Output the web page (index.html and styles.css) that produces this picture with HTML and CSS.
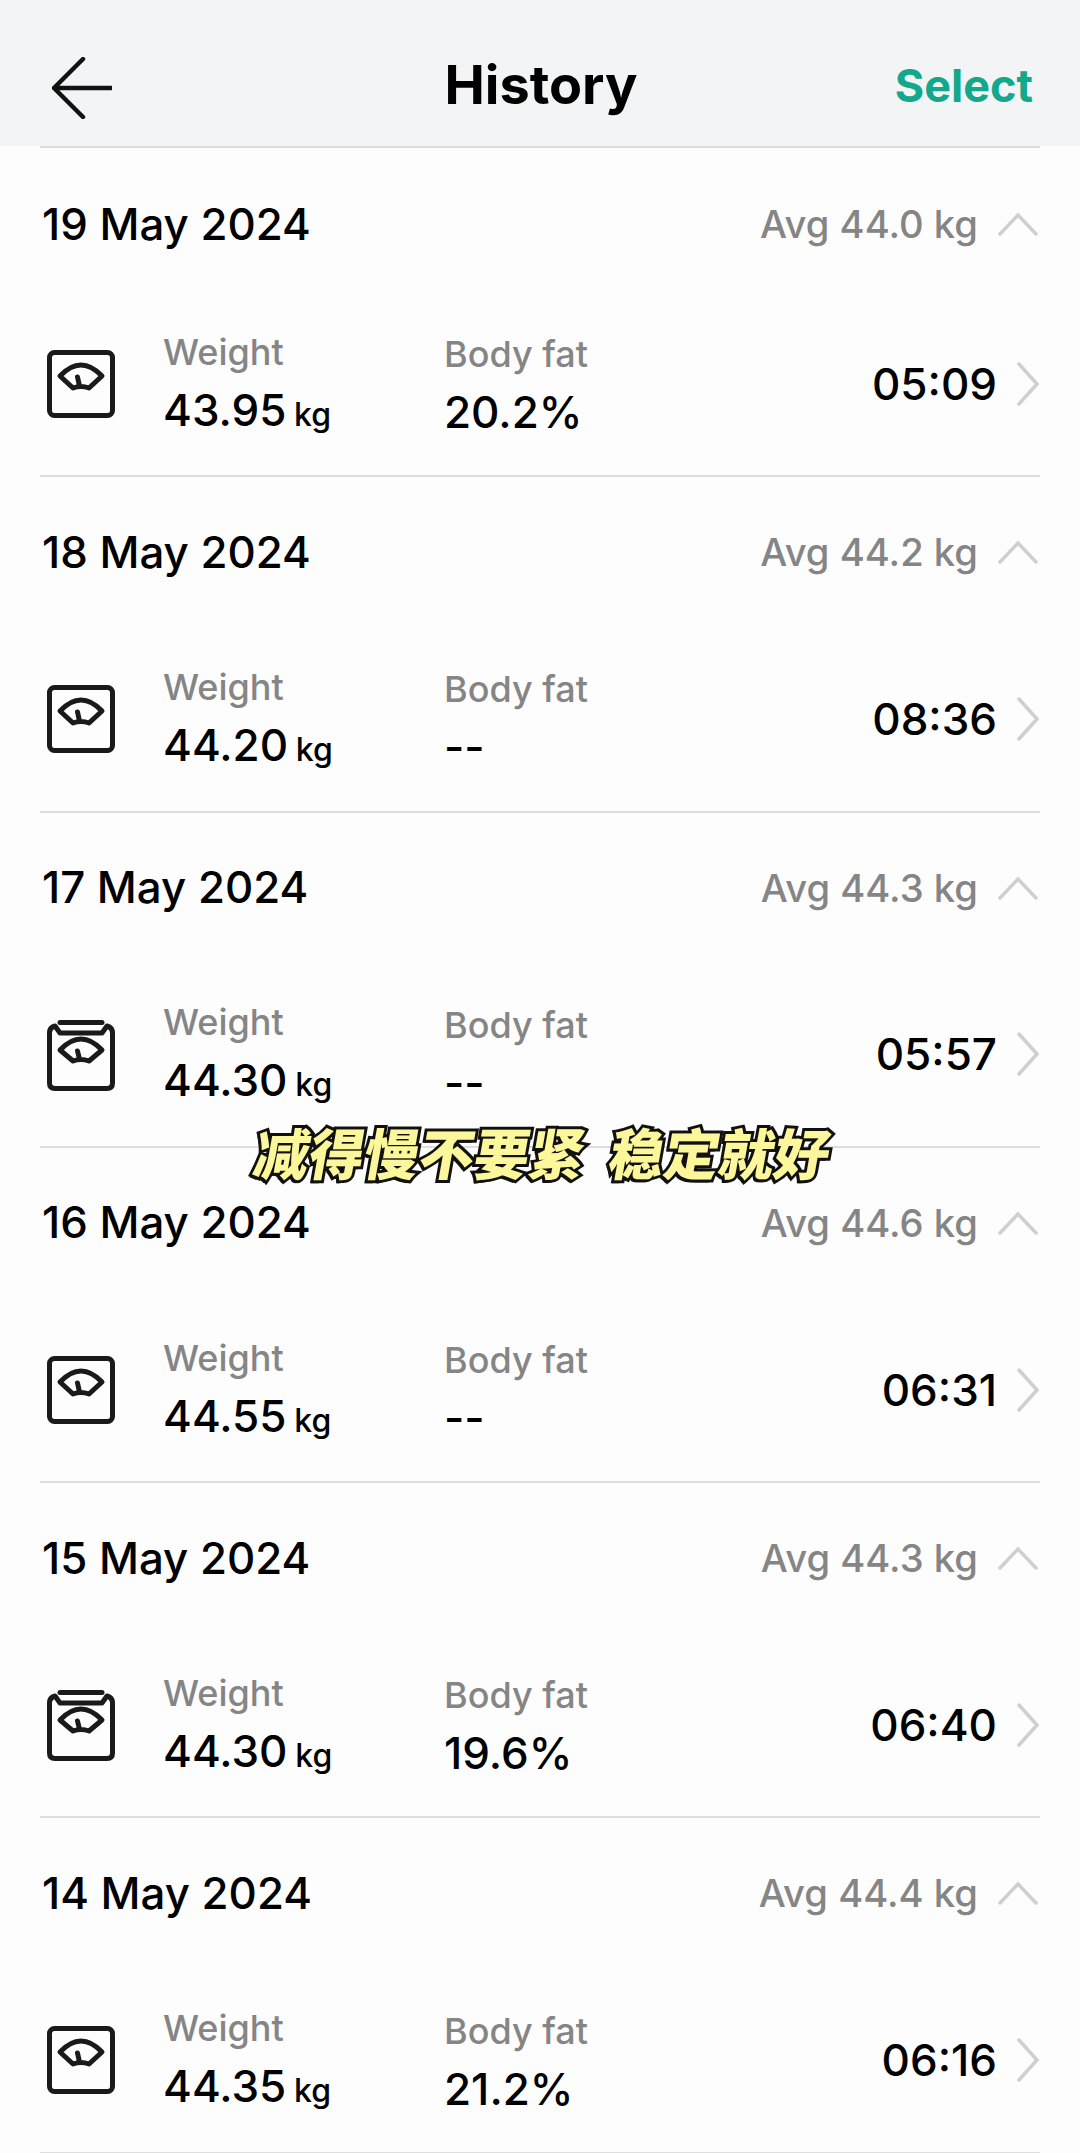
FILE: index.html
```html
<!DOCTYPE html>
<html lang="en">
<head>
    <meta charset="UTF-8">
    <meta name="viewport" content="width=device-width, initial-scale=1.0">
    <title>History</title>
    <link rel="stylesheet" href="styles.css">
</head>
<body>
    <svg class="defs" width="0" height="0">
        <symbol id="scale" viewBox="0 0 68 68">
            <rect x="2.5" y="2.5" width="63" height="63" rx="5"/>
            <path d="M13 26 Q34 4 55 26 L42 38 Q34 35 26 38 Z M30.500 27 L32.500 36"/>
        </symbol>
        <symbol id="scale-lid" viewBox="0 0 68 71">
            <path d="M13 2.500 H55"/>
            <path d="M8 6 Q2.500 7.500 2.500 13 V63 Q2.500 68.500 8 68.500 H60 Q65.500 68.500 65.500 63 V13 Q65.500 7.500 60 6 L55 13 H13 Z"/>
            <path d="M13 30 Q34 8 55 30 L42 41 Q34 38 26 41 Z M30.500 31 L32.500 39"/>
        </symbol>
        <symbol id="up" viewBox="0 0 40 24">
            <path d="M2 22 L20 3 L38 22"/>
        </symbol>
        <symbol id="right" viewBox="0 0 24 44">
            <path d="M3 2 L21 22 L3 42"/>
        </symbol>
    </svg>

    <header class="topbar">
        <svg class="back" viewBox="0 0 60 62"><path d="M31 2 L2 31 L31 60 M2 31 H59"/></svg>
        <h1>History</h1>
        <span class="select">Select</span>
    </header>

    <main class="list">
        <section class="day first">
            <div class="day-head">
                <span class="date">19 May 2024</span>
                <span class="avg">Avg 44.0 kg</span>
                <svg class="up"><use href="#up"/></svg>
            </div>
            <div class="entry">
                <svg class="scale"><use href="#scale"/></svg>
                <div class="metric"><span class="label">Weight</span><span class="value">43.95 <small>kg</small></span></div>
                <div class="metric"><span class="label">Body fat</span><span class="value">20.2%</span></div>
                <span class="time">05:09</span>
                <svg class="right"><use href="#right"/></svg>
            </div>
        </section>

        <section class="day">
            <div class="day-head">
                <span class="date">18 May 2024</span>
                <span class="avg">Avg 44.2 kg</span>
                <svg class="up"><use href="#up"/></svg>
            </div>
            <div class="entry">
                <svg class="scale"><use href="#scale"/></svg>
                <div class="metric"><span class="label">Weight</span><span class="value">44.20 <small>kg</small></span></div>
                <div class="metric"><span class="label">Body fat</span><span class="value">--</span></div>
                <span class="time">08:36</span>
                <svg class="right"><use href="#right"/></svg>
            </div>
        </section>

        <section class="day">
            <div class="day-head">
                <span class="date">17 May 2024</span>
                <span class="avg">Avg 44.3 kg</span>
                <svg class="up"><use href="#up"/></svg>
            </div>
            <div class="entry">
                <svg class="scale lid"><use href="#scale-lid"/></svg>
                <div class="metric"><span class="label">Weight</span><span class="value">44.30 <small>kg</small></span></div>
                <div class="metric"><span class="label">Body fat</span><span class="value">--</span></div>
                <span class="time">05:57</span>
                <svg class="right"><use href="#right"/></svg>
            </div>
        </section>

        <section class="day">
            <div class="day-head">
                <span class="date">16 May 2024</span>
                <span class="avg">Avg 44.6 kg</span>
                <svg class="up"><use href="#up"/></svg>
            </div>
            <div class="entry">
                <svg class="scale"><use href="#scale"/></svg>
                <div class="metric"><span class="label">Weight</span><span class="value">44.55 <small>kg</small></span></div>
                <div class="metric"><span class="label">Body fat</span><span class="value">--</span></div>
                <span class="time">06:31</span>
                <svg class="right"><use href="#right"/></svg>
            </div>
        </section>

        <section class="day">
            <div class="day-head">
                <span class="date">15 May 2024</span>
                <span class="avg">Avg 44.3 kg</span>
                <svg class="up"><use href="#up"/></svg>
            </div>
            <div class="entry">
                <svg class="scale lid"><use href="#scale-lid"/></svg>
                <div class="metric"><span class="label">Weight</span><span class="value">44.30 <small>kg</small></span></div>
                <div class="metric"><span class="label">Body fat</span><span class="value">19.6%</span></div>
                <span class="time">06:40</span>
                <svg class="right"><use href="#right"/></svg>
            </div>
        </section>

        <section class="day">
            <div class="day-head">
                <span class="date">14 May 2024</span>
                <span class="avg">Avg 44.4 kg</span>
                <svg class="up"><use href="#up"/></svg>
            </div>
            <div class="entry">
                <svg class="scale"><use href="#scale"/></svg>
                <div class="metric"><span class="label">Weight</span><span class="value">44.35 <small>kg</small></span></div>
                <div class="metric"><span class="label">Body fat</span><span class="value">21.2%</span></div>
                <span class="time">06:16</span>
                <svg class="right"><use href="#right"/></svg>
            </div>
        </section>
    </main>

    <div class="caption">减得慢不要紧&nbsp;&nbsp;稳定就好</div>
</body>
</html>
```

FILE: styles.css
```css
* {
    box-sizing: border-box;
}

html,
body {
    height: 2153px;
    overflow: hidden;
}

body {
    margin: 0;
    position: relative;
    background-color: #fdfdfe;
    font-family: Inter, "Noto Sans", sans-serif;
    color: #000;
}

.defs {
    position: absolute;
}

.topbar {
    height: 146px;
    padding: 0 47px 0 52px;
    display: flex;
    align-items: center;
    justify-content: space-between;
    background-color: #f2f4f5;
    position: relative;
}

.back {
    width: 60px;
    height: 62px;
    margin-top: 30px;
    fill: none;
    stroke: #111;
    stroke-width: 4.5;
    stroke-linecap: round;
    stroke-linejoin: round;
}

.topbar h1 {
    position: absolute;
    left: 2px;
    right: 0;
    margin: 0;
    text-align: center;
    font-size: 54px;
    font-weight: 700;
    line-height: 170px;
    height: 146px;
}

.select {
    font-size: 45px;
    font-weight: 700;
    color: #12a88c;
    margin-top: 25px;
}

.list {
    margin: 0 40px;
    border-top: 2px solid #dcdddd;
}

.day {
    border-bottom: 2px solid #dcdddd;
}

.day-head {
    height: 150px;
    display: flex;
    align-items: center;
    font-weight: 500;
}

.first .day-head {
    height: 144px;
    padding-top: 8px;
}

.date {
    font-size: 43.8px;
    margin-right: auto;
    padding-left: 2px;
}

.avg {
    font-size: 38.2px;
    color: #858585;
}

.up {
    width: 40px;
    height: 24px;
    margin-left: 20px;
    margin-right: 2px;
    fill: none;
    stroke: #cfcfcf;
    stroke-width: 3.5;
    stroke-linecap: round;
}

.entry {
    height: 183.3px;
    display: grid;
    grid-template-columns: 123px 281px 1fr auto auto;
    align-items: center;
}

.scale {
    width: 68px;
    height: 68px;
    margin-left: 7px;
    fill: none;
    stroke: #1a1a1a;
    stroke-width: 5;
    stroke-linecap: round;
    stroke-linejoin: round;
}

.scale.lid {
    height: 71px;
    margin-top: 2px;
}

.metric {
    display: flex;
    flex-direction: column;
    gap: 12px;
    padding-top: 3px;
    font-weight: 500;
}

.label {
    font-size: 36px;
    line-height: 42px;
    color: #858585;
}

.value {
    font-size: 44px;
    line-height: 50px;
}

.value small {
    font-size: 32px;
    margin-left: -4px;
}

.time {
    grid-column: 4;
    font-size: 44px;
    font-weight: 500;
    margin-right: 19px;
}

.right {
    width: 24px;
    height: 44px;
    fill: none;
    stroke: #cfcfcf;
    stroke-width: 3.5;
    stroke-linecap: round;
}

.caption {
    position: absolute;
    top: 1113px;
    left: 0;
    width: 1080px;
    padding-left: 6px;
    text-align: center;
    font-family: "Noto Sans CJK SC", sans-serif;
    font-size: 55px;
    line-height: 76px;
    font-weight: 900;
    color: #fcf79a;
    -webkit-text-stroke: 6px #111;
    paint-order: stroke fill;
    text-shadow: -2px 3px 0 #111;
    transform: skewX(-10deg);
}
```
